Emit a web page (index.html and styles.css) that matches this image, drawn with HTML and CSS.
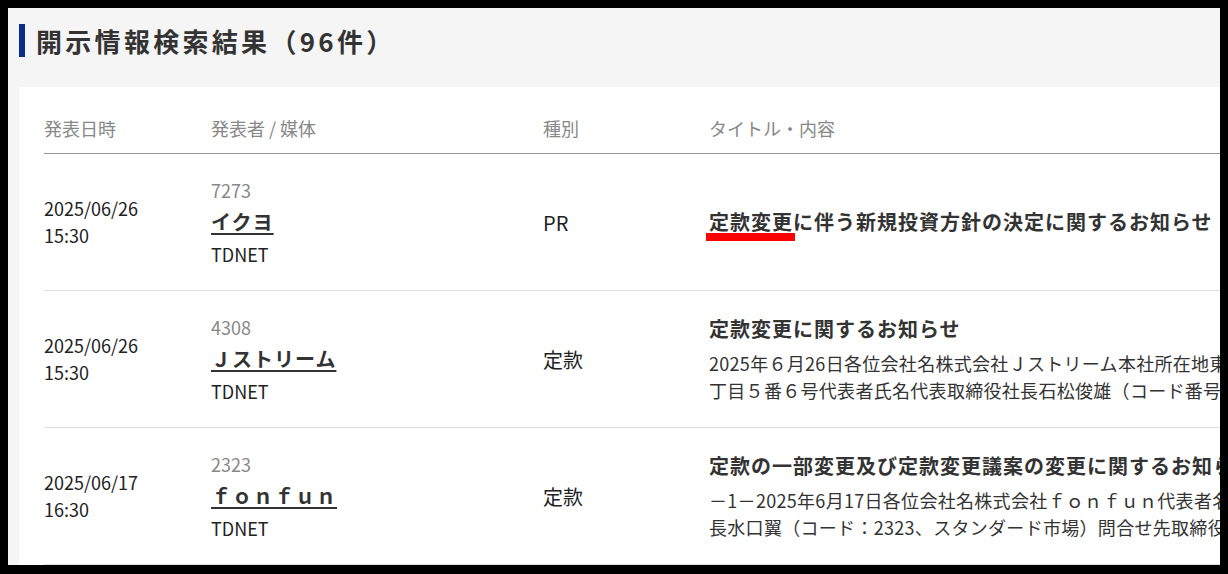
FILE: index.html
```html
<!DOCTYPE html>
<html lang="ja">
<head>
	<meta charset="UTF-8">
	<title>開示情報検索結果</title>
	<link rel="stylesheet" href="styles.css">
</head>
<body>
	<div class="page">
		<h1 class="pageTitle">開示情報検索結果（96件）</h1>

		<div class="panel">
			<table class="results">
				<colgroup>
					<col class="colDate">
					<col class="colCompany">
					<col class="colType">
					<col>
				</colgroup>
				<thead>
					<tr>
						<th>発表日時</th>
						<th>発表者 / 媒体</th>
						<th>種別</th>
						<th>タイトル・内容</th>
					</tr>
				</thead>
				<tbody>
					<tr>
						<td class="date">2025/06/26<br>15:30</td>
						<td class="company">
							<span class="code">7273</span>
							<a href="#" class="name">イクヨ</a>
							<span class="media">TDNET</span>
						</td>
						<td class="type">PR</td>
						<td class="content">
							<p class="title"><span class="hit">定款変更</span>に伴う新規投資方針の決定に関するお知らせ</p>
						</td>
					</tr>
					<tr>
						<td class="date">2025/06/26<br>15:30</td>
						<td class="company">
							<span class="code">4308</span>
							<a href="#" class="name">Ｊストリーム</a>
							<span class="media">TDNET</span>
						</td>
						<td class="type">定款</td>
						<td class="content">
							<p class="title">定款変更に関するお知らせ</p>
							<p class="desc">
								<span>2025年６月26日各位会社名株式会社Ｊストリーム本社所在地東京都港区芝二</span>
								<span>丁目５番６号代表者氏名代表取締役社長石松俊雄（コード番号：4308　東証スタンダード）</span>
							</p>
						</td>
					</tr>
					<tr>
						<td class="date">2025/06/17<br>16:30</td>
						<td class="company">
							<span class="code">2323</span>
							<a href="#" class="name">ｆｏｎｆｕｎ</a>
							<span class="media">TDNET</span>
						</td>
						<td class="type">定款</td>
						<td class="content">
							<p class="title">定款の一部変更及び定款変更議案の変更に関するお知らせ</p>
							<p class="desc">
								<span>－1－2025年6月17日各位会社名株式会社ｆｏｎｆｕｎ代表者名代表取締役社</span>
								<span>長水口翼（コード：2323、スタンダード市場）問合せ先取締役管理本部長</span>
							</p>
						</td>
					</tr>
				</tbody>
			</table>
		</div>
	</div>
</body>
</html>
```

FILE: styles.css
```css
html {
	background: #000;
}

body {
	margin: 0;
	padding: 8px;
	font-family: "Noto Sans CJK JP", "Noto Sans", sans-serif;
	color: #222;
}

p, h1 {
	margin: 0;
}

.page {
	height: 557px;
	overflow: hidden;
	background: #f5f5f5;
	padding: 16px 0 0 11px;
	box-sizing: border-box;
}

/* page heading with the blue bar */
.pageTitle {
	height: 33px;
	line-height: 33px;
	border-left: 6px solid #0b2d8c;
	padding-left: 11px;
	font-size: 26px;
	font-weight: bold;
	letter-spacing: 3.3px;
	color: #333;
	margin-bottom: 30px;
}

.panel {
	width: 1500px;
	background: #fff;
	padding-left: 25px;
}

.results {
	width: 100%;
	border-collapse: collapse;
	table-layout: fixed;
}

.colDate {
	width: 167px;
}

.colCompany {
	width: 332px;
}

.colType {
	width: 166px;
}

.results th {
	text-align: left;
	font-weight: normal;
	font-size: 18px;
	color: #888;
	line-height: 26px;
	padding: 28px 0 12px;
	border-bottom: 1px solid #999;
}

.results td {
	height: 136px;
	padding: 0;
	vertical-align: middle;
	border-bottom: 1px solid #ddd;
	font-size: 18px;
	line-height: 27px;
}

.date {
	color: #222;
}

.company span,
.company a {
	display: block;
}

.code {
	font-size: 18px;
	line-height: 30px;
	color: #888;
}

.name {
	font-size: 20px;
	line-height: 34px;
	font-weight: bold;
	letter-spacing: 1px;
	color: #333;
	text-decoration: underline;
	text-decoration-thickness: 2px;
	text-underline-offset: 3px;
}

.company .name {
	display: inline-block;
}

.media {
	font-size: 18px;
	line-height: 31px;
}

.results td.type {
	font-size: 20px;
}

.title {
	font-size: 20px;
	line-height: 30px;
	font-weight: bold;
	letter-spacing: 1px;
	color: #333;
	white-space: nowrap;
}

.hit {
	position: relative;
}

.hit::after {
	content: "";
	position: absolute;
	left: -3px;
	right: -2px;
	bottom: -5px;
	height: 8px;
	background: #f00;
}

.desc {
	margin-top: 6px;
	color: #333;
}

.desc span {
	display: block;
	white-space: nowrap;
	letter-spacing: 0.3px;
}
```
